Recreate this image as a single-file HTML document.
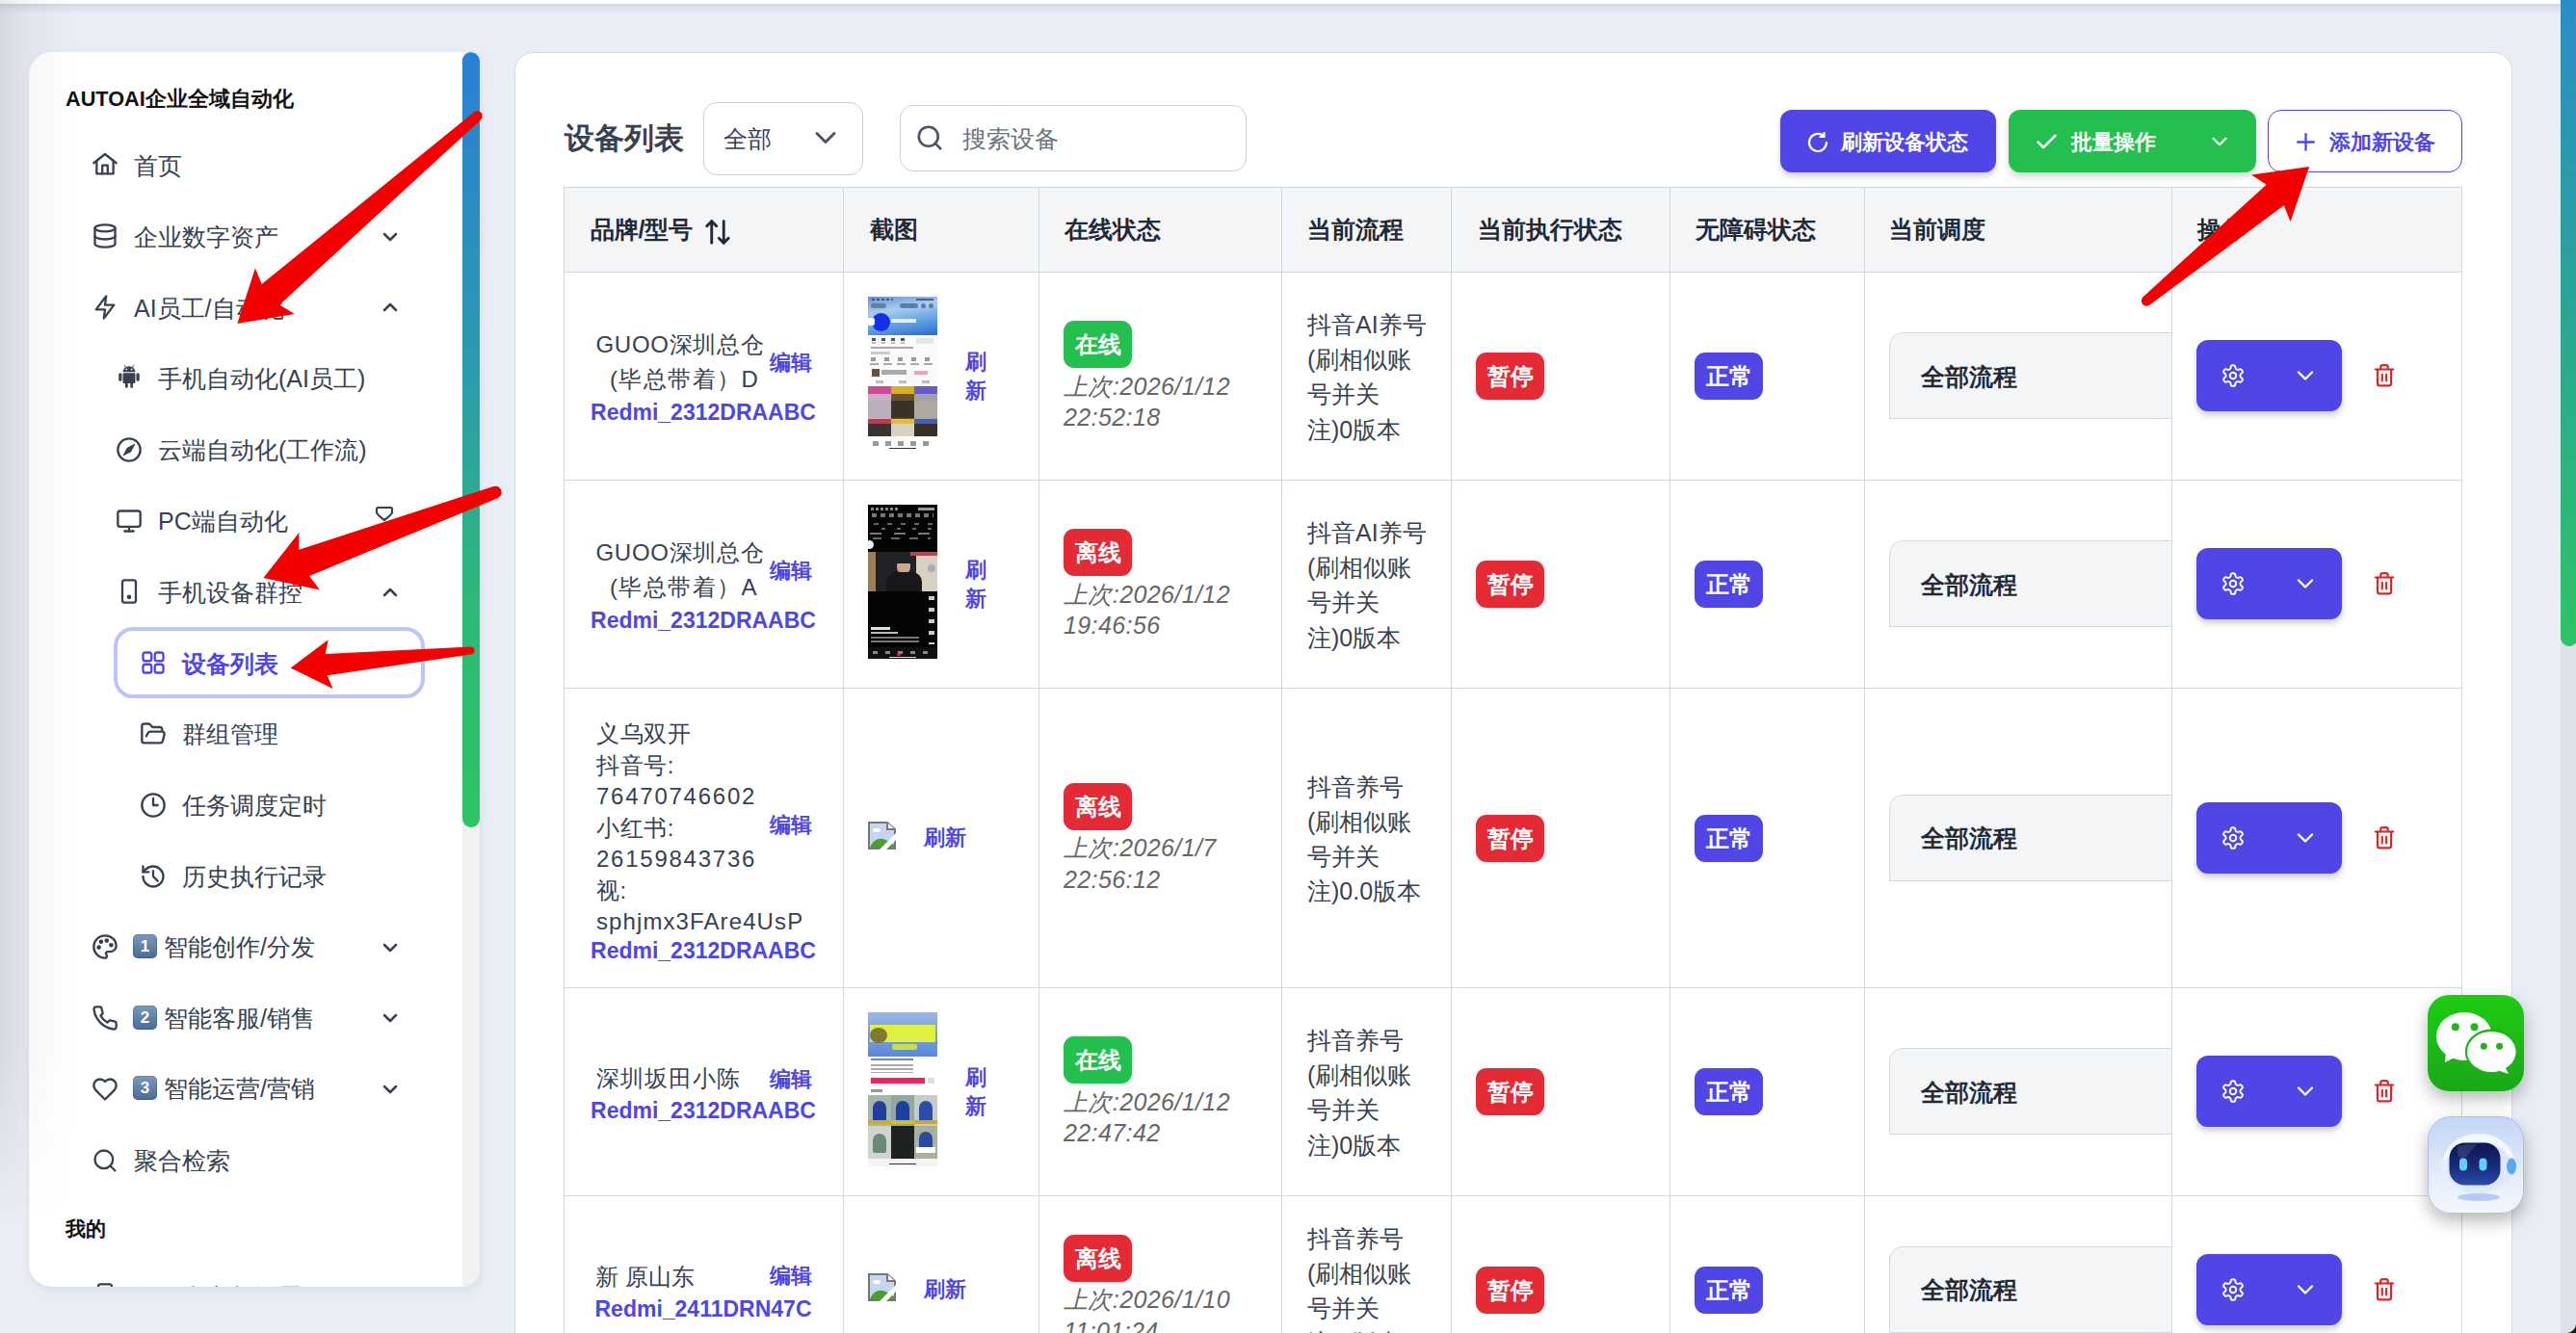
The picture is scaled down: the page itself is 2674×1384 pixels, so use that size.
<!DOCTYPE html>
<html><head><meta charset="utf-8">
<style>
*{box-sizing:border-box;margin:0;padding:0}
html,body{width:2674px;height:1384px;overflow:hidden}
body{position:relative;background:#e9edf5;font-family:"Liberation Sans",sans-serif;color:#374151}
.a{position:absolute;white-space:nowrap}
svg.i{position:absolute;fill:none;stroke:currentColor;stroke-linecap:round;stroke-linejoin:round}
.m{font-size:25px;line-height:25px;color:#374151}
.hd{font-weight:bold;font-size:25px;line-height:25px;color:#1f2937}
.hl{position:absolute;height:2px;background:#d9dde4}
.vl{position:absolute;width:2px;background:#d9dde4}
.badge{position:absolute;width:71px;height:49px;border-radius:11px;color:#fff;font-weight:bold;font-size:24px;line-height:49px;text-align:center}
.nm{font-size:24px;line-height:24px;color:#374151}
.ed{font-size:22px;line-height:22px;color:#4f46e5;font-weight:bold}
.rd{font-size:23px;line-height:23px;color:#4f46e5;font-weight:bold}
.rf{font-size:22px;line-height:30px;color:#4f46e5;font-weight:bold}
.tm{font-style:italic;font-size:25px;line-height:32.5px;color:#666;letter-spacing:0.4px}
.fl{font-size:25px;line-height:36.2px;color:#374151}
</style></head><body>
<div class="a" style="left:0;top:0;width:2674px;height:4px;background:#fff"></div>
<div class="a" style="left:0;top:4px;width:2674px;height:10px;background:linear-gradient(rgba(0,0,0,0.09),rgba(0,0,0,0))"></div>
<div class="a" style="left:30px;top:54px;width:468px;height:1282px;background:#fff;border-radius:24px 9px 18px 24px;overflow:hidden;box-shadow:1px 3px 8px rgba(0,0,0,0.08)">
<div class="a" style="left:450px;top:0;width:18px;height:1282px;background:#f1f1f1"></div>
<div class="a" style="left:450px;top:0;width:18px;height:805px;border-radius:9px;background:linear-gradient(#2a7fd5,#2a9bb0 40%,#2db879 70%,#2ec464)"></div>
</div>
<div class="a" style="left:30px;top:54px;width:450px;height:1282px;overflow:hidden;border-radius:24px 0 0 24px">
<div class="a" style="left:-30px;top:-54px;width:2674px;height:1384px">
<div class="a" style="left:68px;top:92px;font-weight:bold;font-size:21.7px;line-height:21.7px;color:#111">AUTOAI企业全域自动化</div>
<svg class="i" style="left:95px;top:156.5px;width:28px;height:28px;color:#374151" viewBox="0 0 24 24" stroke-width="2"><path d="M2 10.5 12 2.6 22 10.5"/><path d="M4.6 8.6V20h14.8V8.6"/><path d="M9.6 20v-7.4h4.8V20"/></svg>
<div class="a m" style="left:139px;top:160.0px;">首页</div>
<svg class="i" style="left:95px;top:231.3px;width:28px;height:28px;color:#374151" viewBox="0 0 24 24" stroke-width="2"><ellipse cx="12" cy="5" rx="9" ry="3"/><path d="M3 5V19A9 3 0 0 0 21 19V5"/><path d="M3 12A9 3 0 0 0 21 12"/></svg>
<div class="a m" style="left:139px;top:233.8px;">企业数字资产</div>
<svg class="i" style="left:392.5px;top:233.5px;width:24px;height:24px;color:#374151" viewBox="0 0 24 24" stroke-width="2.5"><path d="m6 9 6 6 6-6"/></svg>
<svg class="i" style="left:95px;top:305.1px;width:28px;height:28px;color:#374151" viewBox="0 0 24 24" stroke-width="2"><path d="M13 2 4 14h8l-1 8 9-12h-8l1-8z"/></svg>
<div class="a m" style="left:139px;top:307.6px;">AI员工/自动化</div>
<svg class="i" style="left:392.5px;top:307.3px;width:24px;height:24px;color:#374151" viewBox="0 0 24 24" stroke-width="2.5"><path d="m18 15-6-6-6 6"/></svg>
<svg class="a" style="left:121px;top:377.4px;width:26px;height:28px" viewBox="0 0 24 26"><g fill="#374151"><path d="M6 8.5a6 5.5 0 0 1 12 0z"/><rect x="6" y="9.5" width="12" height="10" rx="1.2"/><rect x="2" y="9.5" width="3" height="8" rx="1.5"/><rect x="19" y="9.5" width="3" height="8" rx="1.5"/><rect x="8.2" y="18" width="2.6" height="6" rx="1.3"/><rect x="13.2" y="18" width="2.6" height="6" rx="1.3"/></g><g stroke="#374151" stroke-width="0.9"><line x1="7.5" y1="2" x2="9" y2="4.5"/><line x1="16.5" y1="2" x2="15" y2="4.5"/></g><circle cx="9.5" cy="6" r="0.8" fill="#fff"/><circle cx="14.5" cy="6" r="0.8" fill="#fff"/></svg>
<div class="a m" style="left:164px;top:381.4px;">手机自动化(AI员工)</div>
<svg class="i" style="left:120px;top:452.7px;width:28px;height:28px;color:#374151" viewBox="0 0 24 24" stroke-width="2"><circle cx="12" cy="12" r="10"/><polygon points="16.8 7.2 13.4 13.4 7.2 16.8 10.6 10.6" fill="currentColor" stroke-width="1"/></svg>
<div class="a m" style="left:164px;top:455.2px;">云端自动化(工作流)</div>
<svg class="i" style="left:120px;top:526.5px;width:28px;height:28px;color:#374151" viewBox="0 0 24 24" stroke-width="2"><rect width="20" height="14" x="2" y="3" rx="2"/><line x1="8" x2="16" y1="21" y2="21"/><line x1="12" x2="12" y1="17" y2="21"/></svg>
<div class="a m" style="left:164px;top:529.0px;">PC端自动化</div>
<svg class="a" style="left:386px;top:525.0px;width:26px;height:24px" viewBox="0 0 26 24" fill="none" stroke="#374151" stroke-width="2.2" stroke-linejoin="round"><path d="M5 3.5Q5 2 6.5 2H19.5Q21 2 21 3.5V7Q21 9 13 15Q5 9 5 7Z"/></svg>
<svg class="i" style="left:120px;top:600.3px;width:28px;height:28px;color:#374151" viewBox="0 0 24 24" stroke-width="2"><rect width="12" height="20" x="6" y="2" rx="2"/><circle cx="12" cy="17" r="1" fill="currentColor"/></svg>
<div class="a m" style="left:164px;top:602.8px;">手机设备群控</div>
<svg class="i" style="left:392.5px;top:602.5px;width:24px;height:24px;color:#374151" viewBox="0 0 24 24" stroke-width="2.5"><path d="m18 15-6-6-6 6"/></svg>
<div class="a" style="left:118px;top:651px;width:323px;height:74px;border:4px solid #bcc5fb;border-radius:20px"></div>
<svg class="i" style="left:145px;top:674.1px;width:28px;height:28px;color:#4f46e5" viewBox="0 0 24 24" stroke-width="2"><rect width="7.5" height="7.5" x="3" y="3" rx="2"/><rect width="7.5" height="7.5" x="13.5" y="3" rx="2"/><rect width="7.5" height="7.5" x="3" y="13.5" rx="2"/><rect width="7.5" height="7.5" x="13.5" y="13.5" rx="2"/></svg>
<div class="a m" style="left:189px;top:676.6px;font-weight:bold;color:#4f46e5;">设备列表</div>
<svg class="i" style="left:145px;top:747.9px;width:28px;height:28px;color:#374151" viewBox="0 0 24 24" stroke-width="2"><path d="m6 14 1.45-2.9A2 2 0 0 1 9.24 10H20a2 2 0 0 1 1.94 2.5l-1.55 6a2 2 0 0 1-1.94 1.5H4a2 2 0 0 1-2-2V5c0-1.1.9-2 2-2h3.93a2 2 0 0 1 1.66.9l.82 1.2a2 2 0 0 0 1.66.9H18a2 2 0 0 1 2 2v2"/></svg>
<div class="a m" style="left:189px;top:750.4px;">群组管理</div>
<svg class="i" style="left:145px;top:821.7px;width:28px;height:28px;color:#374151" viewBox="0 0 24 24" stroke-width="2"><circle cx="12" cy="12" r="10"/><polyline points="12 6 12 12 16 12"/></svg>
<div class="a m" style="left:189px;top:824.2px;">任务调度定时</div>
<svg class="i" style="left:145px;top:895.5px;width:28px;height:28px;color:#374151" viewBox="0 0 24 24" stroke-width="2"><path d="M3 12a9 9 0 1 0 9-9 9.75 9.75 0 0 0-6.74 2.74L3 8"/><path d="M3 3v5h5"/><path d="M12 7v5l4 4"/></svg>
<div class="a m" style="left:189px;top:898.0px;">历史执行记录</div>
<svg class="i" style="left:95px;top:969.3px;width:28px;height:28px;color:#374151" viewBox="0 0 24 24" stroke-width="2"><circle cx="13.5" cy="6.5" r="1" fill="currentColor"/><circle cx="17.5" cy="10.5" r="1" fill="currentColor"/><circle cx="8.5" cy="7.5" r="1" fill="currentColor"/><circle cx="6.5" cy="12.5" r="1" fill="currentColor"/><path d="M12 2C6.5 2 2 6.5 2 12s4.5 10 10 10c.926 0 1.648-.746 1.648-1.688 0-.437-.18-.835-.437-1.125-.29-.289-.438-.652-.438-1.125a1.64 1.64 0 0 1 1.668-1.668h1.996c3.051 0 5.555-2.503 5.555-5.554C21.965 6.012 17.461 2 12 2z"/></svg>
<div class="a" style="left:138px;top:969.8px;width:25px;height:25px;border-radius:5px;background:linear-gradient(#7a9ac0,#4a6b93);color:#fff;font-weight:bold;font-size:17px;line-height:25px;text-align:center;box-shadow:inset 0 0 0 1px rgba(0,0,0,0.15)">1</div>
<div class="a m" style="left:170px;top:970.8px">智能创作/分发</div>
<svg class="i" style="left:392.5px;top:971.5px;width:24px;height:24px;color:#374151" viewBox="0 0 24 24" stroke-width="2.5"><path d="m6 9 6 6 6-6"/></svg>
<svg class="i" style="left:95px;top:1043.1px;width:28px;height:28px;color:#374151" viewBox="0 0 24 24" stroke-width="2"><path d="M22 16.92v3a2 2 0 0 1-2.18 2 19.79 19.79 0 0 1-8.63-3.07 19.5 19.5 0 0 1-6-6 19.79 19.79 0 0 1-3.07-8.67A2 2 0 0 1 4.11 2h3a2 2 0 0 1 2 1.72 12.84 12.84 0 0 0 .7 2.81 2 2 0 0 1-.45 2.11L8.09 9.91a16 16 0 0 0 6 6l1.27-1.27a2 2 0 0 1 2.11-.45 12.84 12.84 0 0 0 2.81.7A2 2 0 0 1 22 16.92z"/></svg>
<div class="a" style="left:138px;top:1043.6px;width:25px;height:25px;border-radius:5px;background:linear-gradient(#7a9ac0,#4a6b93);color:#fff;font-weight:bold;font-size:17px;line-height:25px;text-align:center;box-shadow:inset 0 0 0 1px rgba(0,0,0,0.15)">2</div>
<div class="a m" style="left:170px;top:1044.6px">智能客服/销售</div>
<svg class="i" style="left:392.5px;top:1045.3px;width:24px;height:24px;color:#374151" viewBox="0 0 24 24" stroke-width="2.5"><path d="m6 9 6 6 6-6"/></svg>
<svg class="i" style="left:95px;top:1116.9px;width:28px;height:28px;color:#374151" viewBox="0 0 24 24" stroke-width="2"><path d="M19 14c1.49-1.46 3-3.21 3-5.5A5.5 5.5 0 0 0 16.5 3c-1.76 0-3 .5-4.5 2-1.5-1.5-2.74-2-4.5-2A5.5 5.5 0 0 0 2 8.5c0 2.3 1.5 4.05 3 5.5l7 7Z"/></svg>
<div class="a" style="left:138px;top:1117.4px;width:25px;height:25px;border-radius:5px;background:linear-gradient(#7a9ac0,#4a6b93);color:#fff;font-weight:bold;font-size:17px;line-height:25px;text-align:center;box-shadow:inset 0 0 0 1px rgba(0,0,0,0.15)">3</div>
<div class="a m" style="left:170px;top:1118.4px">智能运营/营销</div>
<svg class="i" style="left:392.5px;top:1119.1000000000001px;width:24px;height:24px;color:#374151" viewBox="0 0 24 24" stroke-width="2.5"><path d="m6 9 6 6 6-6"/></svg>
<svg class="i" style="left:95px;top:1190.7px;width:28px;height:28px;color:#374151" viewBox="0 0 24 24" stroke-width="2"><circle cx="11" cy="11" r="8"/><path d="m21 21-4.3-4.3"/></svg>
<div class="a m" style="left:139px;top:1193.2px;">聚合检索</div>
<div class="a" style="left:68px;top:1265px;font-weight:bold;font-size:21px;line-height:21px;color:#111">我的</div>
<svg class="i" style="left:95px;top:1331px;width:28px;height:28px;color:#374151" viewBox="0 0 24 24" stroke-width="2"><rect width="12" height="20" x="6" y="2" rx="2"/><circle cx="12" cy="17" r="1" fill="currentColor"/></svg>
<div class="a m" style="left:139px;top:1335px">个人中心与设置</div>
</div></div>
<div class="a" style="left:0;top:0;width:75px;height:1384px;background:linear-gradient(90deg,rgba(50,60,80,0.11),rgba(50,60,80,0.045) 30px,rgba(50,60,80,0) 75px);-webkit-mask-image:linear-gradient(#000 78%,transparent 92%)"></div>
<div class="a" style="left:534px;top:54px;width:2074px;height:1400px;background:#fff;border:1px solid #d3dce8;border-radius:20px"></div>
<div class="a" style="left:2658px;top:0;width:18px;height:1384px;background:#dee3eb"></div>
<div class="a" style="left:2658px;top:-20px;width:18px;height:691px;border-radius:9px;background:linear-gradient(#2b8ccb,#2aa39a 45%,#2ec464)"></div>
<div class="a" style="left:586px;top:128px;font-weight:bold;font-size:31px;line-height:31px;color:#374151">设备列表</div>
<div class="a" style="left:730px;top:106px;width:166px;height:76px;border:1.5px solid #c9d0da;border-radius:14px"></div>
<div class="a m" style="left:751px;top:131.5px">全部</div>
<svg class="i" style="left:838.5px;top:124.5px;width:36px;height:36px;color:#4b5563" viewBox="0 0 24 24" stroke-width="2"><path d="m6 9 6 6 6-6"/></svg>
<div class="a" style="left:934px;top:109px;width:360px;height:69px;border:1.5px solid #c9d0da;border-radius:14px"></div>
<svg class="i" style="left:950px;top:128px;width:30px;height:30px;color:#4b5563" viewBox="0 0 24 24" stroke-width="2.1"><circle cx="11" cy="11" r="8"/><path d="m21 21-4.3-4.3"/></svg>
<div class="a m" style="left:999px;top:131.5px;color:#6b7280">搜索设备</div>
<div class="a" style="left:1848px;top:114px;width:224px;height:65px;border-radius:12px;background:#4f46e5;box-shadow:0 4px 6px rgba(0,0,0,0.18)"></div>
<svg class="i" style="left:1875px;top:135.5px;width:24px;height:24px;color:#fff" viewBox="0 0 24 24" stroke-width="2.2"><path d="M21 12a9 9 0 1 1-3.2-6.9"/><path d="M18.5 2v4h-4"/></svg>
<div class="a" style="left:1911px;top:136.5px;font-weight:bold;font-size:22px;line-height:22px;color:#fff">刷新设备状态</div>
<div class="a" style="left:2085px;top:114px;width:257px;height:65px;border-radius:12px;background:#23bf4f;box-shadow:0 4px 6px rgba(0,0,0,0.18)"></div>
<svg class="i" style="left:2111px;top:134px;width:27px;height:27px;color:#fff" viewBox="0 0 24 24" stroke-width="2.2"><path d="M20 6 9 17l-5-5"/></svg>
<div class="a" style="left:2150px;top:136.5px;font-weight:bold;font-size:22px;line-height:22px;color:#fff">批量操作</div>
<svg class="i" style="left:2291px;top:134px;width:26px;height:26px;color:#fff" viewBox="0 0 24 24" stroke-width="2.2"><path d="m6 9 6 6 6-6"/></svg>
<div class="a" style="left:2354px;top:114px;width:202px;height:65px;border-radius:14px;border:1.5px solid #4f46e5;background:#fff"></div>
<svg class="i" style="left:2381px;top:135px;width:25px;height:25px;color:#4f46e5" viewBox="0 0 24 24" stroke-width="2.2"><path d="M4 12h16"/><path d="M12 4v16"/></svg>
<div class="a" style="left:2418px;top:136.5px;font-weight:bold;font-size:22px;line-height:22px;color:#4f46e5">添加新设备</div>
<div class="a" style="left:585px;top:194px;width:1971px;height:89px;background:#f4f5f7"></div>
<div class="a" style="left:585px;top:194px;width:1971px;height:1px;background:#d3d8e0"></div>
<div class="a" style="left:585px;top:282px;width:1971px;height:1px;background:#d3d8e0"></div>
<div class="a" style="left:585px;top:498px;width:1971px;height:1px;background:#d3d8e0"></div>
<div class="a" style="left:585px;top:714px;width:1971px;height:1px;background:#d3d8e0"></div>
<div class="a" style="left:585px;top:1025px;width:1971px;height:1px;background:#d3d8e0"></div>
<div class="a" style="left:585px;top:1241px;width:1971px;height:1px;background:#d3d8e0"></div>
<div class="a" style="left:585px;top:194px;width:1px;height:1200px;background:#d3d8e0"></div>
<div class="a" style="left:875px;top:194px;width:1px;height:1200px;background:#d3d8e0"></div>
<div class="a" style="left:1078px;top:194px;width:1px;height:1200px;background:#d3d8e0"></div>
<div class="a" style="left:1330px;top:194px;width:1px;height:1200px;background:#d3d8e0"></div>
<div class="a" style="left:1506px;top:194px;width:1px;height:1200px;background:#d3d8e0"></div>
<div class="a" style="left:1733px;top:194px;width:1px;height:1200px;background:#d3d8e0"></div>
<div class="a" style="left:1935px;top:194px;width:1px;height:1200px;background:#d3d8e0"></div>
<div class="a hd" style="left:612.5px;top:226px">品牌/型号</div>
<div class="a hd" style="left:903px;top:226px">截图</div>
<div class="a hd" style="left:1105px;top:226px">在线状态</div>
<div class="a hd" style="left:1356.5px;top:226px">当前流程</div>
<div class="a hd" style="left:1533.5px;top:226px">当前执行状态</div>
<div class="a hd" style="left:1760px;top:226px">无障碍状态</div>
<div class="a hd" style="left:1961px;top:226px">当前调度</div>
<svg class="i" style="left:730px;top:226px;width:30px;height:30px;color:#1f2937" viewBox="0 0 24 24" stroke-width="2.3"><path d="M7 21V3"/><path d="m3 7 4-4 4 4"/><path d="M17 3v18"/><path d="m13 17 4 4 4-4"/></svg>
<div class="a rf" style="left:1002px;top:361px;white-space:normal;width:24px">刷新</div>
<div class="badge" style="left:1104px;top:333px;background:#23bf4f">在线</div>
<div class="a tm" style="left:1104px;top:384.5px">上次:2026/1/12<br>22:52:18</div>
<div class="a fl" style="left:1357px;top:319px">抖音AI养号<br>(刷相似账<br>号并关<br>注)0版本</div>
<div class="badge" style="left:1532px;top:366px;background:#e32a35">暂停</div>
<div class="badge" style="left:1759px;top:366px;background:#4f46e5">正常</div>
<div class="a" style="left:1961px;top:345px;width:320px;height:90px;background:#f4f5f7;border:1px solid #d3d8e0;border-radius:14px 0 0 0"></div>
<div class="a hd" style="left:1994px;top:378.5px">全部流程</div>
<div class="a rf" style="left:1002px;top:577px;white-space:normal;width:24px">刷新</div>
<div class="badge" style="left:1104px;top:549px;background:#e32a35">离线</div>
<div class="a tm" style="left:1104px;top:600.5px">上次:2026/1/12<br>19:46:56</div>
<div class="a fl" style="left:1357px;top:535px">抖音AI养号<br>(刷相似账<br>号并关<br>注)0版本</div>
<div class="badge" style="left:1532px;top:582px;background:#e32a35">暂停</div>
<div class="badge" style="left:1759px;top:582px;background:#4f46e5">正常</div>
<div class="a" style="left:1961px;top:561px;width:320px;height:90px;background:#f4f5f7;border:1px solid #d3d8e0;border-radius:14px 0 0 0"></div>
<div class="a hd" style="left:1994px;top:594.5px">全部流程</div>
<div class="a" style="left:958.5px;top:859.0px;font-size:22px;line-height:22px;color:#4f46e5;font-weight:bold">刷新</div>
<div class="badge" style="left:1104px;top:812.5px;background:#e32a35">离线</div>
<div class="a tm" style="left:1104px;top:864.0px">上次:2026/1/7<br>22:56:12</div>
<div class="a fl" style="left:1357px;top:798.5px">抖音养号<br>(刷相似账<br>号并关<br>注)0.0版本</div>
<div class="badge" style="left:1532px;top:845.5px;background:#e32a35">暂停</div>
<div class="badge" style="left:1759px;top:845.5px;background:#4f46e5">正常</div>
<div class="a" style="left:1961px;top:824.5px;width:320px;height:90px;background:#f4f5f7;border:1px solid #d3d8e0;border-radius:14px 0 0 0"></div>
<div class="a hd" style="left:1994px;top:858.0px">全部流程</div>
<div class="a rf" style="left:1002px;top:1104px;white-space:normal;width:24px">刷新</div>
<div class="badge" style="left:1104px;top:1076px;background:#23bf4f">在线</div>
<div class="a tm" style="left:1104px;top:1127.5px">上次:2026/1/12<br>22:47:42</div>
<div class="a fl" style="left:1357px;top:1062px">抖音养号<br>(刷相似账<br>号并关<br>注)0版本</div>
<div class="badge" style="left:1532px;top:1109px;background:#e32a35">暂停</div>
<div class="badge" style="left:1759px;top:1109px;background:#4f46e5">正常</div>
<div class="a" style="left:1961px;top:1088px;width:320px;height:90px;background:#f4f5f7;border:1px solid #d3d8e0;border-radius:14px 0 0 0"></div>
<div class="a hd" style="left:1994px;top:1121.5px">全部流程</div>
<div class="a" style="left:958.5px;top:1328.0px;font-size:22px;line-height:22px;color:#4f46e5;font-weight:bold">刷新</div>
<div class="badge" style="left:1104px;top:1281.5px;background:#e32a35">离线</div>
<div class="a tm" style="left:1104px;top:1333.0px">上次:2026/1/10<br>11:01:24</div>
<div class="a fl" style="left:1357px;top:1267.5px">抖音养号<br>(刷相似账<br>号并关<br>注)0版本</div>
<div class="badge" style="left:1532px;top:1314.5px;background:#e32a35">暂停</div>
<div class="badge" style="left:1759px;top:1314.5px;background:#4f46e5">正常</div>
<div class="a" style="left:1961px;top:1293.5px;width:320px;height:90px;background:#f4f5f7;border:1px solid #d3d8e0;border-radius:14px 0 0 0"></div>
<div class="a hd" style="left:1994px;top:1327.0px">全部流程</div>
<div class="a" style="left:2254px;top:282px;width:302px;height:1110px;background:#fff"></div>
<div class="a" style="left:2254px;top:194px;width:302px;height:89px;background:#f4f5f7"></div>
<div class="a" style="left:2254px;top:194px;width:302px;height:1px;background:#d3d8e0"></div>
<div class="a" style="left:2254px;top:282px;width:302px;height:1px;background:#d3d8e0"></div>
<div class="a" style="left:2254px;top:498px;width:302px;height:1px;background:#d3d8e0"></div>
<div class="a" style="left:2254px;top:714px;width:302px;height:1px;background:#d3d8e0"></div>
<div class="a" style="left:2254px;top:1025px;width:302px;height:1px;background:#d3d8e0"></div>
<div class="a" style="left:2254px;top:1241px;width:302px;height:1px;background:#d3d8e0"></div>
<div class="a" style="left:2254px;top:194px;width:1px;height:1200px;background:#d3d8e0"></div>
<div class="a" style="left:2555px;top:194px;width:1px;height:1200px;background:#d3d8e0"></div>
<div class="a hd" style="left:2281px;top:226px">操作</div>
<div class="a" style="left:2280px;top:353px;width:151px;height:74px;border-radius:12px;background:#4f46e5;box-shadow:0 4px 6px rgba(0,0,0,0.2)"></div>
<svg class="i" style="left:2305px;top:377px;width:26px;height:26px;color:#fff" viewBox="0 0 24 24" stroke-width="1.8"><path d="M12.22 2h-.44a2 2 0 0 0-2 2v.18a2 2 0 0 1-1 1.73l-.43.25a2 2 0 0 1-2 0l-.15-.08a2 2 0 0 0-2.73.73l-.22.38a2 2 0 0 0 .73 2.73l.15.1a2 2 0 0 1 1 1.72v.51a2 2 0 0 1-1 1.74l-.15.09a2 2 0 0 0-.73 2.73l.22.38a2 2 0 0 0 2.73.73l.15-.08a2 2 0 0 1 2 0l.43.25a2 2 0 0 1 1 1.73V20a2 2 0 0 0 2 2h.44a2 2 0 0 0 2-2v-.18a2 2 0 0 1 1-1.73l.43-.25a2 2 0 0 1 2 0l.15.08a2 2 0 0 0 2.73-.73l.22-.39a2 2 0 0 0-.73-2.73l-.15-.08a2 2 0 0 1-1-1.74v-.5a2 2 0 0 1 1-1.74l.15-.09a2 2 0 0 0 .73-2.73l-.22-.38a2 2 0 0 0-2.73-.73l-.15.08a2 2 0 0 1-2 0l-.43-.25a2 2 0 0 1-1-1.73V4a2 2 0 0 0-2-2z"/><circle cx="12" cy="12" r="3"/></svg>
<svg class="i" style="left:2379px;top:376px;width:28px;height:28px;color:#fff" viewBox="0 0 24 24" stroke-width="2"><path d="m6 9 6 6 6-6"/></svg>
<svg class="i" style="left:2462px;top:377px;width:26px;height:26px;color:#dc2626" viewBox="0 0 24 24" stroke-width="2"><path d="M3.5 6h17"/><path d="M18.5 6v13.5a2 2 0 0 1-2 2h-9a2 2 0 0 1-2-2V6"/><path d="M8.5 6V4a2 2 0 0 1 2-2h3a2 2 0 0 1 2 2v2"/><line x1="10" x2="10" y1="11" y2="17"/><line x1="14" x2="14" y1="11" y2="17"/></svg>
<div class="a" style="left:2280px;top:569px;width:151px;height:74px;border-radius:12px;background:#4f46e5;box-shadow:0 4px 6px rgba(0,0,0,0.2)"></div>
<svg class="i" style="left:2305px;top:593px;width:26px;height:26px;color:#fff" viewBox="0 0 24 24" stroke-width="1.8"><path d="M12.22 2h-.44a2 2 0 0 0-2 2v.18a2 2 0 0 1-1 1.73l-.43.25a2 2 0 0 1-2 0l-.15-.08a2 2 0 0 0-2.73.73l-.22.38a2 2 0 0 0 .73 2.73l.15.1a2 2 0 0 1 1 1.72v.51a2 2 0 0 1-1 1.74l-.15.09a2 2 0 0 0-.73 2.73l.22.38a2 2 0 0 0 2.73.73l.15-.08a2 2 0 0 1 2 0l.43.25a2 2 0 0 1 1 1.73V20a2 2 0 0 0 2 2h.44a2 2 0 0 0 2-2v-.18a2 2 0 0 1 1-1.73l.43-.25a2 2 0 0 1 2 0l.15.08a2 2 0 0 0 2.73-.73l.22-.39a2 2 0 0 0-.73-2.73l-.15-.08a2 2 0 0 1-1-1.74v-.5a2 2 0 0 1 1-1.74l.15-.09a2 2 0 0 0 .73-2.73l-.22-.38a2 2 0 0 0-2.73-.73l-.15.08a2 2 0 0 1-2 0l-.43-.25a2 2 0 0 1-1-1.73V4a2 2 0 0 0-2-2z"/><circle cx="12" cy="12" r="3"/></svg>
<svg class="i" style="left:2379px;top:592px;width:28px;height:28px;color:#fff" viewBox="0 0 24 24" stroke-width="2"><path d="m6 9 6 6 6-6"/></svg>
<svg class="i" style="left:2462px;top:593px;width:26px;height:26px;color:#dc2626" viewBox="0 0 24 24" stroke-width="2"><path d="M3.5 6h17"/><path d="M18.5 6v13.5a2 2 0 0 1-2 2h-9a2 2 0 0 1-2-2V6"/><path d="M8.5 6V4a2 2 0 0 1 2-2h3a2 2 0 0 1 2 2v2"/><line x1="10" x2="10" y1="11" y2="17"/><line x1="14" x2="14" y1="11" y2="17"/></svg>
<div class="a" style="left:2280px;top:832.5px;width:151px;height:74px;border-radius:12px;background:#4f46e5;box-shadow:0 4px 6px rgba(0,0,0,0.2)"></div>
<svg class="i" style="left:2305px;top:856.5px;width:26px;height:26px;color:#fff" viewBox="0 0 24 24" stroke-width="1.8"><path d="M12.22 2h-.44a2 2 0 0 0-2 2v.18a2 2 0 0 1-1 1.73l-.43.25a2 2 0 0 1-2 0l-.15-.08a2 2 0 0 0-2.73.73l-.22.38a2 2 0 0 0 .73 2.73l.15.1a2 2 0 0 1 1 1.72v.51a2 2 0 0 1-1 1.74l-.15.09a2 2 0 0 0-.73 2.73l.22.38a2 2 0 0 0 2.73.73l.15-.08a2 2 0 0 1 2 0l.43.25a2 2 0 0 1 1 1.73V20a2 2 0 0 0 2 2h.44a2 2 0 0 0 2-2v-.18a2 2 0 0 1 1-1.73l.43-.25a2 2 0 0 1 2 0l.15.08a2 2 0 0 0 2.73-.73l.22-.39a2 2 0 0 0-.73-2.73l-.15-.08a2 2 0 0 1-1-1.74v-.5a2 2 0 0 1 1-1.74l.15-.09a2 2 0 0 0 .73-2.73l-.22-.38a2 2 0 0 0-2.73-.73l-.15.08a2 2 0 0 1-2 0l-.43-.25a2 2 0 0 1-1-1.73V4a2 2 0 0 0-2-2z"/><circle cx="12" cy="12" r="3"/></svg>
<svg class="i" style="left:2379px;top:855.5px;width:28px;height:28px;color:#fff" viewBox="0 0 24 24" stroke-width="2"><path d="m6 9 6 6 6-6"/></svg>
<svg class="i" style="left:2462px;top:856.5px;width:26px;height:26px;color:#dc2626" viewBox="0 0 24 24" stroke-width="2"><path d="M3.5 6h17"/><path d="M18.5 6v13.5a2 2 0 0 1-2 2h-9a2 2 0 0 1-2-2V6"/><path d="M8.5 6V4a2 2 0 0 1 2-2h3a2 2 0 0 1 2 2v2"/><line x1="10" x2="10" y1="11" y2="17"/><line x1="14" x2="14" y1="11" y2="17"/></svg>
<div class="a" style="left:2280px;top:1096px;width:151px;height:74px;border-radius:12px;background:#4f46e5;box-shadow:0 4px 6px rgba(0,0,0,0.2)"></div>
<svg class="i" style="left:2305px;top:1120px;width:26px;height:26px;color:#fff" viewBox="0 0 24 24" stroke-width="1.8"><path d="M12.22 2h-.44a2 2 0 0 0-2 2v.18a2 2 0 0 1-1 1.73l-.43.25a2 2 0 0 1-2 0l-.15-.08a2 2 0 0 0-2.73.73l-.22.38a2 2 0 0 0 .73 2.73l.15.1a2 2 0 0 1 1 1.72v.51a2 2 0 0 1-1 1.74l-.15.09a2 2 0 0 0-.73 2.73l.22.38a2 2 0 0 0 2.73.73l.15-.08a2 2 0 0 1 2 0l.43.25a2 2 0 0 1 1 1.73V20a2 2 0 0 0 2 2h.44a2 2 0 0 0 2-2v-.18a2 2 0 0 1 1-1.73l.43-.25a2 2 0 0 1 2 0l.15.08a2 2 0 0 0 2.73-.73l.22-.39a2 2 0 0 0-.73-2.73l-.15-.08a2 2 0 0 1-1-1.74v-.5a2 2 0 0 1 1-1.74l.15-.09a2 2 0 0 0 .73-2.73l-.22-.38a2 2 0 0 0-2.73-.73l-.15.08a2 2 0 0 1-2 0l-.43-.25a2 2 0 0 1-1-1.73V4a2 2 0 0 0-2-2z"/><circle cx="12" cy="12" r="3"/></svg>
<svg class="i" style="left:2379px;top:1119px;width:28px;height:28px;color:#fff" viewBox="0 0 24 24" stroke-width="2"><path d="m6 9 6 6 6-6"/></svg>
<svg class="i" style="left:2462px;top:1120px;width:26px;height:26px;color:#dc2626" viewBox="0 0 24 24" stroke-width="2"><path d="M3.5 6h17"/><path d="M18.5 6v13.5a2 2 0 0 1-2 2h-9a2 2 0 0 1-2-2V6"/><path d="M8.5 6V4a2 2 0 0 1 2-2h3a2 2 0 0 1 2 2v2"/><line x1="10" x2="10" y1="11" y2="17"/><line x1="14" x2="14" y1="11" y2="17"/></svg>
<div class="a" style="left:2280px;top:1301.5px;width:151px;height:74px;border-radius:12px;background:#4f46e5;box-shadow:0 4px 6px rgba(0,0,0,0.2)"></div>
<svg class="i" style="left:2305px;top:1325.5px;width:26px;height:26px;color:#fff" viewBox="0 0 24 24" stroke-width="1.8"><path d="M12.22 2h-.44a2 2 0 0 0-2 2v.18a2 2 0 0 1-1 1.73l-.43.25a2 2 0 0 1-2 0l-.15-.08a2 2 0 0 0-2.73.73l-.22.38a2 2 0 0 0 .73 2.73l.15.1a2 2 0 0 1 1 1.72v.51a2 2 0 0 1-1 1.74l-.15.09a2 2 0 0 0-.73 2.73l.22.38a2 2 0 0 0 2.73.73l.15-.08a2 2 0 0 1 2 0l.43.25a2 2 0 0 1 1 1.73V20a2 2 0 0 0 2 2h.44a2 2 0 0 0 2-2v-.18a2 2 0 0 1 1-1.73l.43-.25a2 2 0 0 1 2 0l.15.08a2 2 0 0 0 2.73-.73l.22-.39a2 2 0 0 0-.73-2.73l-.15-.08a2 2 0 0 1-1-1.74v-.5a2 2 0 0 1 1-1.74l.15-.09a2 2 0 0 0 .73-2.73l-.22-.38a2 2 0 0 0-2.73-.73l-.15.08a2 2 0 0 1-2 0l-.43-.25a2 2 0 0 1-1-1.73V4a2 2 0 0 0-2-2z"/><circle cx="12" cy="12" r="3"/></svg>
<svg class="i" style="left:2379px;top:1324.5px;width:28px;height:28px;color:#fff" viewBox="0 0 24 24" stroke-width="2"><path d="m6 9 6 6 6-6"/></svg>
<svg class="i" style="left:2462px;top:1325.5px;width:26px;height:26px;color:#dc2626" viewBox="0 0 24 24" stroke-width="2"><path d="M3.5 6h17"/><path d="M18.5 6v13.5a2 2 0 0 1-2 2h-9a2 2 0 0 1-2-2V6"/><path d="M8.5 6V4a2 2 0 0 1 2-2h3a2 2 0 0 1 2 2v2"/><line x1="10" x2="10" y1="11" y2="17"/><line x1="14" x2="14" y1="11" y2="17"/></svg>
<div class="a nm" style="left:618.5px;top:346px;letter-spacing:0.7px">GUOO深圳总仓</div>
<div class="a nm" style="left:633px;top:382px;letter-spacing:1.4px">(毕总带着）D</div>
<div class="a ed" style="left:799px;top:365.5px">编辑</div>
<div class="a rd" style="left:585px;width:290px;text-align:center;top:417px">Redmi_2312DRAABC</div>
<div class="a nm" style="left:618.5px;top:562px;letter-spacing:0.7px">GUOO深圳总仓</div>
<div class="a nm" style="left:633px;top:598px;letter-spacing:1.4px">(毕总带着）A</div>
<div class="a ed" style="left:799px;top:581.5px">编辑</div>
<div class="a rd" style="left:585px;width:290px;text-align:center;top:633px">Redmi_2312DRAABC</div>
<div class="a nm" style="left:619px;top:746px;line-height:32.5px;letter-spacing:0.6px"><span style="letter-spacing:0.6px">义乌双开</span><br><span style="letter-spacing:0.6px">抖音号:</span><br><span style="letter-spacing:1.75px">76470746602</span><br><span style="letter-spacing:0.6px">小红书:</span><br><span style="letter-spacing:1.75px">26159843736</span><br><span style="letter-spacing:0.6px">视:</span><br><span style="letter-spacing:1.1px">sphjmx3FAre4UsP</span></div>
<div class="a ed" style="left:799px;top:845.5px">编辑</div>
<div class="a rd" style="left:585px;width:290px;text-align:center;top:975.5px">Redmi_2312DRAABC</div>
<div class="a nm" style="left:618.5px;top:1107.5px;letter-spacing:1.2px">深圳坂田小陈</div>
<div class="a ed" style="left:799px;top:1110px">编辑</div>
<div class="a rd" style="left:585px;width:290px;text-align:center;top:1142px">Redmi_2312DRAABC</div>
<div class="a nm" style="left:618px;top:1314px;">新 原山东</div>
<div class="a ed" style="left:799px;top:1314px">编辑</div>
<div class="a rd" style="left:585px;width:290px;text-align:center;top:1348px">Redmi_2411DRN47C</div>
<div class="a" style="left:901px;top:308px;width:72px;height:160px;overflow:hidden;background:#fafafa"><div class="a" style="left:0;top:0;width:72px;height:40px;background:linear-gradient(170deg,#6a8ed0 0%,#a8cdf0 35%,#5a9ae0 70%,#2a6ad0 100%)"></div><div class="a" style="left:4px;top:2px;width:22px;height:2px;background:repeating-linear-gradient(90deg,rgba(30,40,60,0.6) 0 3px,transparent 3px 5px)"></div><div class="a" style="left:50px;top:2px;width:18px;height:2px;background:rgba(30,40,60,0.6)"></div><div class="a" style="left:3px;top:7px;width:16px;height:5px;border-radius:3px;background:rgba(60,70,100,0.5)"></div><div class="a" style="left:33px;top:7px;width:19px;height:5px;border-radius:3px;background:rgba(40,60,110,0.55)"></div><div class="a" style="left:55px;top:7px;width:5px;height:5px;border-radius:3px;background:rgba(40,60,110,0.55)"></div><div class="a" style="left:63px;top:7px;width:5px;height:5px;border-radius:3px;background:rgba(40,60,110,0.55)"></div><div class="a" style="left:4px;top:17px;width:19px;height:19px;border-radius:50%;background:#1530e8"></div><div class="a" style="left:0;top:22px;width:7px;height:8px;border-radius:2px;background:#fff"></div><div class="a" style="left:24px;top:23px;width:26px;height:4px;background:rgba(255,255,255,0.8)"></div><div class="a" style="left:4px;top:43px;width:40px;height:3px;background:repeating-linear-gradient(90deg,#555 0 4px,transparent 4px 10px)"></div><div class="a" style="left:4px;top:47px;width:40px;height:2px;background:repeating-linear-gradient(90deg,#bbb 0 4px,transparent 4px 10px)"></div><div class="a" style="left:50px;top:43px;width:18px;height:6px;background:#e6e6e6"></div><div class="a" style="left:3px;top:52px;width:44px;height:2px;background:#aaa"></div><div class="a" style="left:3px;top:57px;width:20px;height:3px;background:#ccc"></div><div class="a" style="left:3px;top:63px;width:66px;height:4px;background:repeating-linear-gradient(90deg,#999 0 5px,transparent 5px 14px)"></div><div class="a" style="left:2px;top:69px;width:68px;height:2px;background:repeating-linear-gradient(90deg,#aaa 0 9px,transparent 9px 14px)"></div><div class="a" style="left:4px;top:75px;width:8px;height:8px;background:#6b5040"></div><div class="a" style="left:14px;top:76px;width:26px;height:5px;background:#aaa"></div><div class="a" style="left:48px;top:77px;width:14px;height:4px;background:#f4a0b0"></div><div class="a" style="left:8px;top:87px;width:60px;height:3px;background:repeating-linear-gradient(90deg,#bbb 0 8px,transparent 8px 24px)"></div><div class="a" style="left:0;top:93px;width:72px;height:52px;background:linear-gradient(90deg,#c8b0c0 0 24px,#6a5430 24px 48px,#a0a2a8 48px)"></div><div class="a" style="left:0;top:93px;width:72px;height:8px;background:linear-gradient(90deg,#d04a9a 0 24px,#d8b020 24px 48px,#6a5ac8 48px)"></div><div class="a" style="left:0;top:108px;width:72px;height:18px;background:linear-gradient(90deg,#b8b0b8 0 24px,#3a3228 24px 48px,#b0a8a0 48px)"></div><div class="a" style="left:0;top:127px;width:72px;height:5px;background:linear-gradient(90deg,#d03050 0 24px,#e0c030 24px 48px,#4060c0 48px)"></div><div class="a" style="left:0;top:132px;width:72px;height:13px;background:linear-gradient(90deg,#3a3430 0 24px,#d8d0c0 24px 48px,#3a3028 48px)"></div><div class="a" style="left:0;top:145px;width:72px;height:15px;background:#fff"></div><div class="a" style="left:5px;top:150px;width:62px;height:5px;background:repeating-linear-gradient(90deg,#999 0 6px,transparent 6px 13px)"></div><div class="a" style="left:22px;top:157px;width:28px;height:1px;background:#333"></div></div>
<div class="a" style="left:901px;top:524px;width:72px;height:160px;overflow:hidden;background:#040404"><div class="a" style="left:3px;top:3px;width:30px;height:3px;background:repeating-linear-gradient(90deg,#888 0 3px,transparent 3px 5px)"></div><div class="a" style="left:52px;top:3px;width:17px;height:3px;background:#999"></div><div class="a" style="left:4px;top:9px;width:64px;height:4px;background:repeating-linear-gradient(90deg,#777 0 5px,transparent 5px 9px)"></div><div class="a" style="left:6px;top:19px;width:62px;height:2px;background:repeating-linear-gradient(90deg,#666 0 5px,transparent 5px 14px)"></div><div class="a" style="left:14px;top:24px;width:52px;height:2px;background:repeating-linear-gradient(90deg,#666 0 4px,transparent 4px 16px)"></div><div class="a" style="left:2px;top:29px;width:66px;height:2px;background:repeating-linear-gradient(90deg,#777 0 12px,transparent 12px 25px)"></div><div class="a" style="left:5px;top:34px;width:60px;height:2px;background:repeating-linear-gradient(90deg,#666 0 9px,transparent 9px 19px)"></div><div class="a" style="left:-3px;top:37px;width:9px;height:9px;border-radius:50%;background:#eee"></div><div class="a" style="left:0;top:49px;width:72px;height:41px;background:linear-gradient(90deg,#9a8058 0 8px,#202226 8px 50px,#d8d0c0 50px)"></div><div class="a" style="left:44px;top:49px;width:28px;height:4px;background:#b84848"></div><div class="a" style="left:30px;top:56px;width:14px;height:16px;border-radius:7px;background:#c8a890"></div><div class="a" style="left:30px;top:56px;width:14px;height:5px;border-radius:7px 7px 0 0;background:#222"></div><div class="a" style="left:19px;top:70px;width:37px;height:20px;border-radius:10px 10px 0 0;background:#18181c"></div><div class="a" style="left:62px;top:62px;width:8px;height:8px;border-radius:50%;background:#aab"></div><div class="a" style="left:63px;top:95px;width:6px;height:50px;background:repeating-linear-gradient(#ccc 0 4px,transparent 4px 12px)"></div><div class="a" style="left:3px;top:127px;width:20px;height:3px;background:#cde4e8"></div><div class="a" style="left:3px;top:132px;width:28px;height:2px;background:#bbb"></div><div class="a" style="left:3px;top:137px;width:50px;height:6px;background:repeating-linear-gradient(#777 0 2px,transparent 2px 4px)"></div><div class="a" style="left:0;top:148px;width:72px;height:12px;background:#101010"></div><div class="a" style="left:5px;top:152px;width:62px;height:3px;background:repeating-linear-gradient(90deg,#888 0 5px,transparent 5px 13px)"></div><div class="a" style="left:30px;top:154px;width:4px;height:3px;border-radius:50%;background:#f0245c"></div><div class="a" style="left:22px;top:158px;width:28px;height:1px;background:#ddd"></div></div>
<div class="a" style="left:901px;top:1051px;width:72px;height:160px;overflow:hidden;background:#fafafa"><div class="a" style="left:0;top:0;width:72px;height:46px;background:linear-gradient(#9ab8e8,#5a88d8)"></div><div class="a" style="left:2px;top:13px;width:68px;height:18px;background:#e0f040"></div><div class="a" style="left:2px;top:16px;width:18px;height:16px;border-radius:50%;background:#807a30"></div><div class="a" style="left:25px;top:33px;width:26px;height:6px;border-radius:2px;background:#c8e040"></div><div class="a" style="left:0;top:46px;width:72px;height:40px;background:#fff"></div><div class="a" style="left:3px;top:48px;width:44px;height:2px;background:#888"></div><div class="a" style="left:3px;top:54px;width:44px;height:9px;background:repeating-linear-gradient(#aaa 0 2px,transparent 2px 4px)"></div><div class="a" style="left:3px;top:68px;width:56px;height:6px;background:#f0245c"></div><div class="a" style="left:62px;top:68px;width:7px;height:6px;background:#ddd"></div><div class="a" style="left:3px;top:80px;width:12px;height:3px;background:#999"></div><div class="a" style="left:0;top:86px;width:72px;height:70px;background:linear-gradient(90deg,#a8b8a8 0 24px,#90a8a0 24px 48px,#c8ccc8 48px)"></div><div class="a" style="left:5px;top:92px;width:14px;height:22px;border-radius:7px 7px 2px 2px;background:#2040a0"></div><div class="a" style="left:29px;top:92px;width:14px;height:22px;border-radius:7px 7px 2px 2px;background:#2040a0"></div><div class="a" style="left:53px;top:92px;width:14px;height:22px;border-radius:7px 7px 2px 2px;background:#2850a8"></div><div class="a" style="left:0;top:112px;width:72px;height:4px;background:linear-gradient(90deg,#c8b020 0 24px,#d0c030 24px 48px,#c8a830 48px)"></div><div class="a" style="left:0;top:118px;width:72px;height:34px;background:linear-gradient(90deg,#d0d4d0 0 24px,#1e2222 24px 48px,#a8b0a0 48px)"></div><div class="a" style="left:5px;top:126px;width:14px;height:20px;border-radius:7px 7px 2px 2px;background:#6a8a78"></div><div class="a" style="left:53px;top:124px;width:14px;height:20px;border-radius:7px 7px 2px 2px;background:#2a4aa0"></div><div class="a" style="left:50px;top:140px;width:20px;height:6px;background:#fff"></div><div class="a" style="left:0;top:152px;width:72px;height:8px;background:#f4f4f4"></div><div class="a" style="left:22px;top:157px;width:28px;height:1px;background:#333"></div></div>
<svg class="a" style="left:901px;top:853px;width:29px;height:29px" viewBox="0 0 29 29"><path d="M1 1H20L28 8V28H1Z" fill="#c5d6f2" stroke="#777" stroke-width="2"/><path d="M20 1V8H28" fill="#fff" stroke="#777" stroke-width="2"/><ellipse cx="9" cy="9" rx="4" ry="2" fill="#fff"/><path d="M2 27C6 17 14 16 20 20L27 24V27Z" fill="#4aa02c"/><path d="M12 29L29 12V19L19 29Z" fill="#fff"/></svg>
<svg class="a" style="left:901px;top:1321.5px;width:29px;height:29px" viewBox="0 0 29 29"><path d="M1 1H20L28 8V28H1Z" fill="#c5d6f2" stroke="#777" stroke-width="2"/><path d="M20 1V8H28" fill="#fff" stroke="#777" stroke-width="2"/><ellipse cx="9" cy="9" rx="4" ry="2" fill="#fff"/><path d="M2 27C6 17 14 16 20 20L27 24V27Z" fill="#4aa02c"/><path d="M12 29L29 12V19L19 29Z" fill="#fff"/></svg>
<div class="a" style="left:2519.5px;top:1033px;width:100px;height:100px;border-radius:22px;background:linear-gradient(#1fcc12,#19a819);box-shadow:0 8px 18px rgba(0,0,0,0.28);overflow:hidden"><svg class="a" style="left:0;top:0;width:100px;height:100px" viewBox="0 0 100 100"><ellipse cx="38" cy="43" rx="29" ry="25" fill="#fff"/><path d="M19 60 L18 70 L30 64Z" fill="#fff"/><circle cx="28.8" cy="33.2" r="4" fill="#1fb815"/><circle cx="48.5" cy="33.2" r="4" fill="#1fb815"/><ellipse cx="66.3" cy="59" rx="27.5" ry="23.5" fill="#1db516"/><ellipse cx="66.3" cy="59" rx="25.3" ry="21" fill="#fff"/><path d="M80 74 L84 82 L72 78Z" fill="#fff"/><circle cx="58.3" cy="53.3" r="3.5" fill="#1db516"/><circle cx="74.6" cy="53.3" r="3.5" fill="#1db516"/></svg></div>
<div class="a" style="left:2519.5px;top:1159px;width:100px;height:101px;border-radius:24px;background:linear-gradient(#c3d6f6,#e4ecfa 60%,#f4f7fc);border:1px solid #b8b8f0;box-shadow:0 8px 18px rgba(0,0,0,0.28);overflow:hidden"><svg class="a" style="left:0;top:0;width:100px;height:101px" viewBox="0 0 100 101"><ellipse cx="52" cy="83" rx="22" ry="4" fill="#8fb0f0" opacity="0.6"/><ellipse cx="52" cy="48" rx="37" ry="31" fill="#f4f7ff"/><ellipse cx="52" cy="52" rx="35" ry="27" fill="#dfe8fb"/><defs><linearGradient id="rf" x1="0" y1="0" x2="0" y2="1"><stop offset="0" stop-color="#0d1450"/><stop offset="0.55" stop-color="#182a78"/><stop offset="1" stop-color="#2a4cae"/></linearGradient></defs><rect x="21.5" y="26.5" width="53" height="44" rx="16" fill="url(#rf)"/><path d="M30 30 Q40 27 50 28 L36 44 Q28 40 30 30Z" fill="#fff" opacity="0.12"/><rect x="32" y="42.5" width="8" height="13" rx="4" fill="#5fd0f5"/><rect x="52.5" y="42.5" width="8" height="13" rx="4" fill="#5fd0f5"/><ellipse cx="86" cy="51" rx="5" ry="8.5" fill="#5aa8f0"/><ellipse cx="16" cy="51" rx="3.5" ry="7" fill="#e8eefc"/></svg></div>
<svg class="a" style="left:0;top:0;width:2674px;height:1384px" viewBox="0 0 2674 1384"><path fill="#f40000" d="M492 116.6 L271.7 295 L264.9 278.5 L246.3 336 L305.8 326 L290.2 316.5 L499 124.4 A5.2 5.2 0 0 0 492 116.6Z"/><path fill="#f40000" d="M511.3 505.3 L310.4 570.7 L310.4 553 L273.4 600 L331.9 612.6 L321.2 598 L517 517 A6.3 6.3 0 0 0 511.3 505.3Z"/><path fill="#f40000" d="M488.8 671.5 L337.7 678.9 L340.7 664.2 L301.7 693.5 L345.5 714.9 L339.7 701.3 L489.8 679.3 A4 4 0 0 0 488.8 671.5Z"/><path fill="#f40000" d="M2231.7 316.6 L2370.8 213.3 L2377.6 230.2 L2397.2 173.1 L2337 181.6 L2352.6 191.7 L2224.3 308.5 A5.5 5.5 0 0 0 2231.7 316.6Z"/></svg>
<svg class="a" style="left:2650px;top:1360px;width:24px;height:24px" viewBox="0 0 24 24"><path d="M24 13.5V24H15A10 10 0 0 0 24 13.5Z" fill="#1c1c12"/></svg>
<!--NAMES-->
<!--THUMBS-->
<!--ARROWS-->
<!--FLOAT-->
</body></html>
